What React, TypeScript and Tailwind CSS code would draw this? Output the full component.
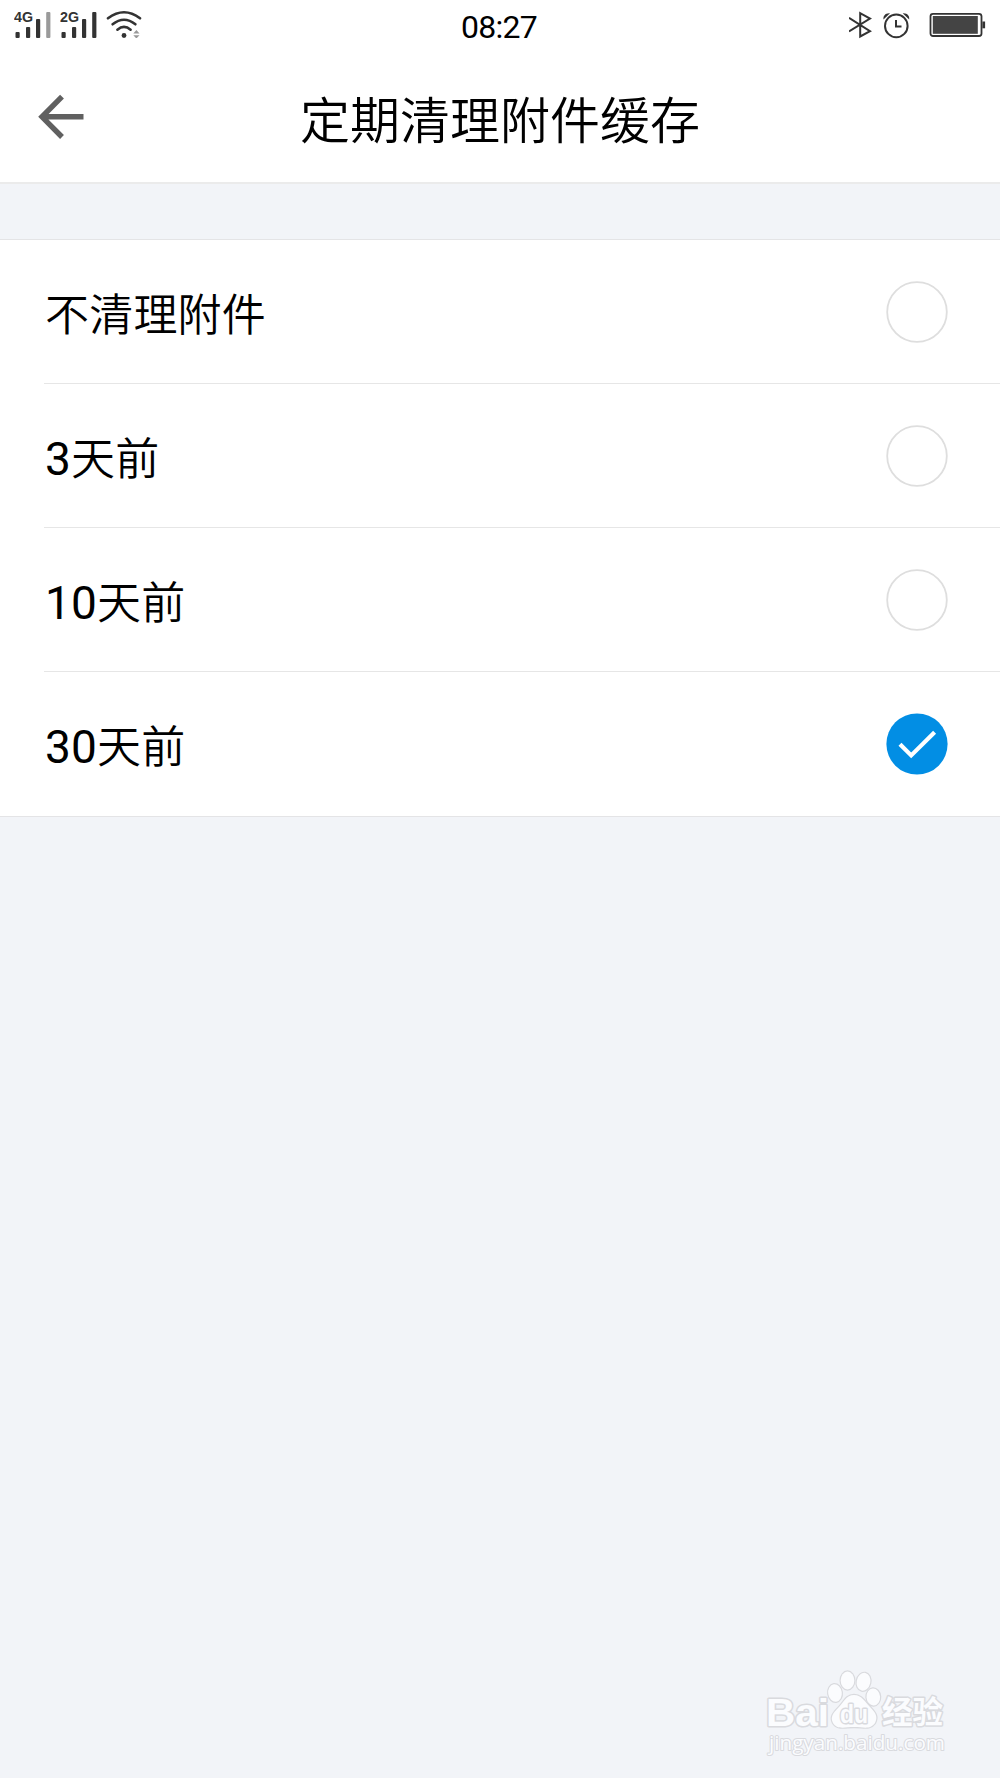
import React, { useState } from 'react';

interface CleanupOption {
  id: string;
  count: string;
  label: string;
}

const OPTIONS: CleanupOption[] = [
  { id: 'never', count: '', label: '不清理附件' },
  { id: '3d', count: '3', label: '天前' },
  { id: '10d', count: '10', label: '天前' },
  { id: '30d', count: '30', label: '天前' },
];

const SignalIcon: React.FC<{ network: string; weak?: boolean }> = ({ network, weak }) => (
  <svg width="38" height="28" viewBox="0 0 38 28" fill="#333333">
    <text x="0" y="12" fontSize="14.5" fontWeight="700" textLength="19" lengthAdjust="spacingAndGlyphs" fontFamily="'Liberation Sans', sans-serif">{network}</text>
    <rect x="1.5" y="22" width="4.2" height="6" rx="1" />
    <rect x="12" y="17" width="4.2" height="11" rx="1" />
    <rect x="22" y="9" width="4.2" height="19" rx="1" />
    <rect x="32.2" y="2" width="4.2" height="26" rx="1" fill={weak ? '#9a9a9a' : '#333333'} />
  </svg>
);

const WifiIcon: React.FC = () => (
  <svg width="36" height="28" viewBox="0 0 36 28" fill="none" stroke="#333333" strokeWidth="2.6" strokeLinecap="round">
    <path d="M2 8.3Q18 -3.8 34 8.3" />
    <path d="M6.6 14.3Q18 5.2 29.4 14.3" />
    <path d="M11.4 19.7Q18 14.2 24.6 19.7" />
    <circle cx="18" cy="25.5" r="2.4" fill="#333333" stroke="none" />
    <path d="M27.3 23.4h6.2l-3.1-3.4zM27.3 25.2h6.2l-3.1 3.3z" fill="#999999" stroke="none" />
  </svg>
);

const StatusBar: React.FC = () => (
  <div className="grid grid-cols-3 h-[51px] px-3.5 pt-[10px]">
    <div className="flex items-start">
      <SignalIcon network="4G" weak />
      <div className="ml-2">
        <SignalIcon network="2G" />
      </div>
      <div className="ml-2">
        <WifiIcon />
      </div>
    </div>
    <div className="pr-[2px] text-center text-[32px] leading-[34px] tracking-[-0.7px] text-black font-[Roboto]">08:27</div>
    <div className="flex items-start justify-end">
      <svg width="24" height="30" viewBox="0 0 24 30" fill="none" stroke="#333333" strokeWidth="2">
        <path d="M0 7.8L21 21.2L11.2 26.5V3.2L21 8.6L0 21.5" />
      </svg>
      <svg className="ml-[9px]" width="28" height="30" viewBox="0 0 28 30" fill="none" stroke="#333333" strokeWidth="2">
        <circle cx="14.3" cy="15.9" r="11.3" />
        <path d="M14 10v6.4h5.5" />
        <path d="M1.5 9.4C1 6 3.4 2.8 8 3.3ZM27.2 9.4C27.7 6 25.3 2.8 20.7 3.3Z" fill="#333333" stroke="none" />
      </svg>
      <svg className="ml-[19px]" width="57" height="30" viewBox="0 0 57 30" fill="none">
        <rect x="1.5" y="3.8" width="51" height="22.2" rx="2.5" stroke="#333333" strokeWidth="1.8" />
        <rect x="3.8" y="6" width="45" height="17.8" fill="#444444" />
        <rect x="53.4" y="11.5" width="2.7" height="6.8" fill="#333333" />
      </svg>
    </div>
  </div>
);

const Header: React.FC = () => (
  <header className="grid grid-cols-[100px_1fr_100px] items-center h-[133px] pt-px border-b-2 border-[#ebebeb]">
    <button className="pl-[37px]" aria-label="返回">
      <svg width="48" height="48" viewBox="0 0 48 48" fill="none" stroke="#606060" strokeWidth="5.4">
        <path d="M25 3.6L5 23.8L25 44M5 23.8h41.5" />
      </svg>
    </button>
    <h1 className="text-center text-[50px] leading-[60px] font-[350] text-black">定期清理附件缓存</h1>
  </header>
);

const RadioMark: React.FC<{ checked: boolean }> = ({ checked }) => (
  <svg className="shrink-0" width="62" height="62" viewBox="0 0 62 62" fill="none">
    {checked ? (
      <>
        <circle cx="31" cy="31" r="30.6" fill="#028ee4" />
        <path d="M14 31.2L25.2 42.4L48.6 19.2" stroke="#ffffff" strokeWidth="4.2" />
      </>
    ) : (
      <circle cx="31" cy="31" r="29.8" stroke="#dedede" strokeWidth="1.8" />
    )}
  </svg>
);

const Watermark: React.FC = () => (
  <svg
    className="absolute right-[50px] bottom-[16px]"
    width="190"
    height="96"
    viewBox="0 0 190 96"
    fill="#fbfcfe"
    stroke="#d9dade"
    strokeWidth="1.6"
    strokeLinejoin="round"
    paintOrder="stroke"
  >
    <text x="6" y="60" fontSize="38" fontWeight="700" textLength="63" lengthAdjust="spacingAndGlyphs" strokeWidth="3" fontFamily="'Liberation Sans', sans-serif">Bai</text>
    <text x="122" y="57" fontSize="31" fontWeight="700" textLength="61" lengthAdjust="spacingAndGlyphs" strokeWidth="3" fontFamily="'Noto Sans CJK SC', sans-serif">经验</text>
    <g strokeWidth="2.4">
      <ellipse cx="75" cy="27" rx="6.8" ry="8.8" transform="rotate(-8 75 27)" />
      <ellipse cx="87.5" cy="14.5" rx="6.8" ry="9" />
      <ellipse cx="103.5" cy="15.8" rx="6.8" ry="9" transform="rotate(12 103.5 15.8)" />
      <ellipse cx="113.3" cy="31" rx="6.8" ry="8.5" transform="rotate(-4 113.3 31)" />
      <path d="M94 29C86 29 84 36 79 41C73 47 70 51 73 57C77 64 85 61 94 61C104 61 110 64 115 57C118 51 116 47 110 41C105 36 102 29 94 29Z" />
    </g>
    <text x="80" y="56.5" fontSize="25" fontWeight="700" textLength="28" lengthAdjust="spacingAndGlyphs" strokeWidth="3" fontFamily="'Liberation Sans', sans-serif">du</text>
    <text x="9" y="84" fontSize="19.5" textLength="176" lengthAdjust="spacingAndGlyphs" strokeWidth="2" fontFamily="'Open Sans', sans-serif">jingyan.baidu.com</text>
  </svg>
);

export default function App() {
  const [selected, setSelected] = useState('30d');

  return (
    <div className="relative flex flex-col w-[1000px] h-[1778px] overflow-hidden bg-[#f2f4f8] font-['Noto_Sans_CJK_SC',sans-serif]">
      <div className="bg-white">
        <StatusBar />
        <Header />
      </div>

      <ul className="mt-[55px] bg-white border-y border-[#e4e4e6]">
        {OPTIONS.map((option, index) => (
          <li key={option.id} className="pl-[44px]">
            <button
              onClick={() => setSelected(option.id)}
              className={`flex w-full h-36 items-center justify-between pr-[52px] text-left ${
                index < OPTIONS.length - 1 ? 'border-b border-[#e6e6e6]' : ''
              }`}
            >
              <span className="pl-px text-[44px] leading-[64px] font-[350] tracking-[0.2px] text-black">
                <span className="font-[Roboto] text-[46px] leading-none font-normal">{option.count}</span>
                {option.label}
              </span>
              <RadioMark checked={selected === option.id} />
            </button>
          </li>
        ))}
      </ul>

      <Watermark />
    </div>
  );
}
